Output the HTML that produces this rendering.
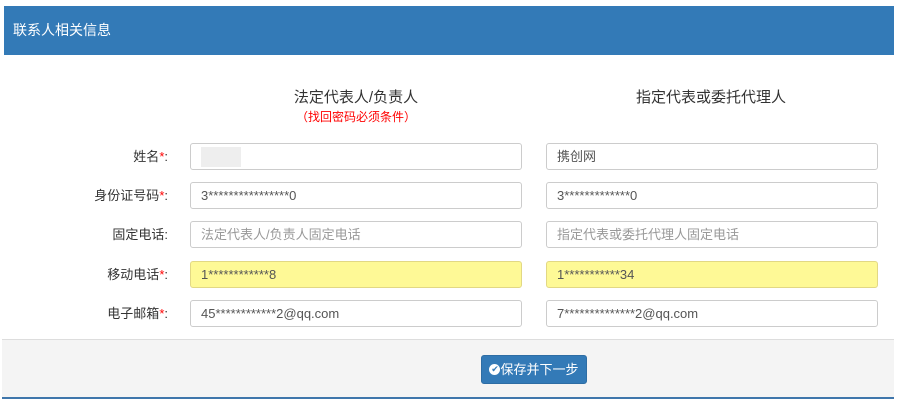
<!DOCTYPE html>
<html><head><meta charset="utf-8"><style>
body{margin:0;background:#fff;font-family:"Liberation Sans","Noto Sans CJK SC",sans-serif;width:898px;height:409px;overflow:hidden;position:relative}
.hd{position:absolute;left:4px;top:6px;width:890px;height:49px;background:#337ab7;color:#fff;font-size:14px;line-height:49px;text-indent:9px}
.ft{position:absolute;left:2px;top:339px;width:892px;height:57px;background:#f4f4f4;border-top:1px solid #ddd;border-bottom:2px solid #3f76ab}
.t{position:absolute;font-size:15px;color:#333;text-align:center;width:300px}
.r{position:absolute;font-size:12px;color:#f00;text-align:center;width:300px}
.l{position:absolute;right:730px;font-size:13px;color:#333;width:120px;text-align:right}
.l b{color:#f00;font-weight:normal}
.i{position:absolute;border:1px solid #ccc;border-radius:3px;background:#fff;font-size:13px;color:#555;line-height:25px;padding-left:10px;box-sizing:border-box;height:27px}
.y{background:#fef996;border-color:#e2d884}
.p{color:#999}
.btn{position:absolute;left:481px;top:355px;width:106px;height:29px;background:#337ab7;border-radius:3px;color:#fff;font-size:13px;line-height:27px;text-align:center;border:1px solid #2e6da4;box-sizing:border-box}
.ic{display:inline-block;width:11px;height:11px;border-radius:50%;background:#fff;color:#337ab7;font-size:9px;line-height:11px;vertical-align:middle;margin-top:-2px}
</style></head><body>
<div class="hd">联系人相关信息</div>
<div class="t" style="left:206px;top:86px">法定代表人/负责人</div>
<div class="r" style="left:206px;top:108px">（找回密码必须条件）</div>
<div class="t" style="left:561px;top:86px">指定代表或委托代理人</div>

<div class="l" style="top:146px">姓名<b>*</b>:</div>
<div class="i" style="left:190px;top:143px;width:332px"><span style="display:inline-block;width:40px;height:20px;background:#eee;margin-top:3px;vertical-align:top"></span></div>
<div class="i" style="left:546px;top:143px;width:332px">携创网</div>

<div class="l" style="top:185px">身份证号码<b>*</b>:</div>
<div class="i" style="left:190px;top:182px;width:332px">3****************0</div>
<div class="i" style="left:546px;top:182px;width:332px">3*************0</div>

<div class="l" style="top:224px">固定电话:</div>
<div class="i p" style="left:190px;top:221px;width:332px">法定代表人/负责人固定电话</div>
<div class="i p" style="left:546px;top:221px;width:332px">指定代表或委托代理人固定电话</div>

<div class="l" style="top:264px">移动电话<b>*</b>:</div>
<div class="i y" style="left:190px;top:261px;width:332px">1************8</div>
<div class="i y" style="left:546px;top:261px;width:332px">1***********34</div>

<div class="l" style="top:303px">电子邮箱<b>*</b>:</div>
<div class="i" style="left:190px;top:300px;width:332px">45************2@qq.com</div>
<div class="i" style="left:546px;top:300px;width:332px">7**************2@qq.com</div>

<div class="ft"></div>
<div class="btn"><span class="ic">✔</span>保存并下一步</div>
</body></html>
